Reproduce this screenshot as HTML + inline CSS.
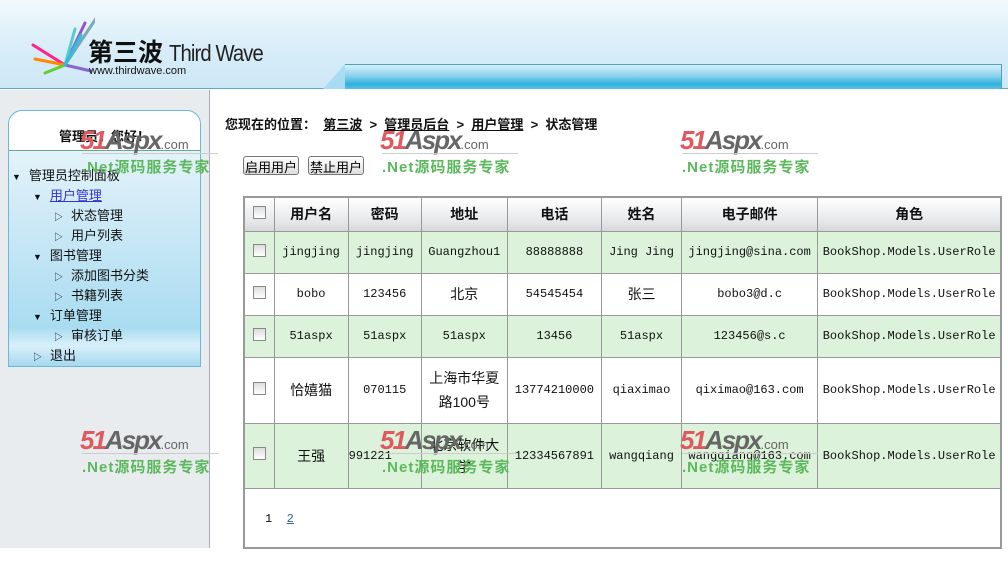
<!DOCTYPE html>
<html><head><meta charset="utf-8"><style>
*{margin:0;padding:0;box-sizing:border-box}
body{width:1008px;height:588px;position:relative;overflow:hidden;background:#fff;font-family:"Liberation Sans","Noto Sans CJK SC",sans-serif;font-size:13px;color:#111}
.hdr{position:absolute;left:0;top:0;width:1008px;height:89px;background:linear-gradient(#f2f9fd,#d6ecf8 60%,#cfe8f6);border-bottom:1px solid #5aa9c8}
.band{position:absolute;left:345px;top:64px;width:657px;height:25px;background:linear-gradient(#d8eefa,#8ad2ee 45%,#2fb0dc 80%,#5cc0e4);border-top:1px solid #4aa3c6;border-right:1px solid #4aa3c6}
.band:before{content:"";position:absolute;left:-22px;top:-1px;border-right:22px solid #a8dcf2;border-top:25px solid transparent}
.side{position:absolute;left:0;top:90px;width:210px;height:458px;background:#e9ecef;border-right:1px solid #aab}
.box{position:absolute;left:8px;top:110px;width:193px;height:257px;border:1px solid #6bb8d8;border-radius:14px 14px 0 0;background:linear-gradient(#f4fafd 0,#e0f1f9 20%,#a9dcf1 85%,#d8f0fa 92%,#a5d8ef)}
.box .t{position:absolute;left:0;top:0;width:100%;height:40px;background:#fff;border-radius:14px 14px 0 0;text-align:center;line-height:52px;font-weight:bold;font-size:13px;border-bottom:1px solid #6a8;}
.nav{position:absolute;font-size:13px;color:#111}
.tri{display:inline-block;margin-right:8px;font-size:9px}
table{position:absolute;left:243px;top:196px;width:759px;border-collapse:collapse;border:2px solid #999;border-bottom:none;table-layout:fixed}
td,th{border:1px solid #999;text-align:center;font-family:"Liberation Mono","Noto Sans CJK SC",monospace;font-size:12px;font-weight:normal;white-space:nowrap;overflow:visible}
th{height:34px;background:linear-gradient(#fff,#e6e8ea 70%,#d5d8da);font-family:"Liberation Sans","Noto Sans CJK SC",sans-serif;font-weight:bold;font-size:14px;border-top:none}
tr.g td{background:#dcf2da}
td.c{font-family:"Liberation Sans","Noto Sans CJK SC",sans-serif;font-size:14px;white-space:normal}
.cb{display:inline-block;width:13px;height:13px;border:1px solid #888;background:linear-gradient(#ddd,#fff)}
.pager{position:absolute;left:243px;top:487px;width:759px;height:62px;border:2px solid #999;border-top:none}
.wm{position:absolute;width:140px;height:55px}
.wm .a{position:absolute;left:0;top:2px;font:italic bold 26px "Liberation Sans",sans-serif;color:#e0595e;letter-spacing:-2px}
.wm .a b{color:#666}
.wm .a i{font-size:13px;color:#666;font-weight:normal;font-style:normal;letter-spacing:0}
.wm .l{position:absolute;left:2px;top:30px;width:136px;border-top:1px solid #ccc}
.wm .n{position:absolute;left:2px;top:33px;font:bold 15px "Liberation Sans","Noto Sans CJK SC",sans-serif;color:#5cb85c;letter-spacing:1px}
button{font-family:"Liberation Sans","Noto Sans CJK SC",sans-serif;font-size:13px;border:1px solid #777;border-radius:3px;background:linear-gradient(#fff,#ddd);padding:0 1px;height:19px;position:absolute;top:156px}
</style></head><body>
<div class="hdr">
<svg style="position:absolute;left:25px;top:15px" width="70" height="60"><g stroke-width="3" stroke-linecap="round"><line x1="40" y1="50" x2="72" y2="2" stroke="#7ab"/><line x1="40" y1="50" x2="60" y2="8" stroke="#9d4fd0"/><line x1="40" y1="50" x2="50" y2="14" stroke="#5cc"/><line x1="40" y1="50" x2="8" y2="30" stroke="#f28"/><line x1="40" y1="50" x2="10" y2="44" stroke="#f80"/><line x1="40" y1="50" x2="20" y2="58" stroke="#6c3"/><line x1="40" y1="50" x2="66" y2="56" stroke="#86c"/><line x1="40" y1="50" x2="56" y2="20" stroke="#3bd"/></g></svg>
<div style="position:absolute;left:88px;top:36px;font:bold 25px 'Noto Sans CJK SC',sans-serif;color:#111;line-height:30px;white-space:nowrap">第三波<span style="font:23px 'Liberation Sans',sans-serif;font-weight:normal;color:#222;letter-spacing:-1px;display:inline-block;transform:scaleX(0.88);transform-origin:left;margin-left:6px">Third Wave</span></div>
<div style="position:absolute;left:89px;top:65px;font-size:11px;color:#111">www.thirdwave.com</div>
<div class="band"></div>
</div>
<div class="side"></div>
<div class="box"><div class="t">管理员，您好！</div></div>
<div class="nav" style="left:12px;top:165px"><span class="tri">▼</span>管理员控制面板</div>
<div class="nav" style="left:33px;top:185px"><span class="tri">▼</span><u style="color:#33c">用户管理</u></div>
<div class="nav" style="left:54px;top:205px"><span class="tri">▷</span>状态管理</div>
<div class="nav" style="left:54px;top:225px"><span class="tri">▷</span>用户列表</div>
<div class="nav" style="left:33px;top:245px"><span class="tri">▼</span>图书管理</div>
<div class="nav" style="left:54px;top:265px"><span class="tri">▷</span>添加图书分类</div>
<div class="nav" style="left:54px;top:285px"><span class="tri">▷</span>书籍列表</div>
<div class="nav" style="left:33px;top:305px"><span class="tri">▼</span>订单管理</div>
<div class="nav" style="left:54px;top:325px"><span class="tri">▷</span>审核订单</div>
<div class="nav" style="left:33px;top:345px"><span class="tri">▷</span>退出</div>

<div style="position:absolute;left:225px;top:114px;font-weight:bold;font-size:13px">您现在的位置：&nbsp;&nbsp;<u>第三波</u> &nbsp;&gt;&nbsp; <u>管理员后台</u> &nbsp;&gt;&nbsp; <u>用户管理</u> &nbsp;&gt;&nbsp; 状态管理</div>
<button style="left:243px">启用用户</button><button style="left:308px">禁止用户</button>

<table>
<colgroup><col style="width:30px"><col style="width:74px"><col style="width:73px"><col style="width:86px"><col style="width:94px"><col style="width:80px"><col style="width:136px"><col style="width:183px"></colgroup>
<tr><th><span class="cb"></span></th><th>用户名</th><th>密码</th><th>地址</th><th>电话</th><th>姓名</th><th>电子邮件</th><th>角色</th></tr>
<tr class="g" style="height:42px"><td><span class="cb"></span></td><td>jingjing</td><td>jingjing</td><td>Guangzhou1</td><td>88888888</td><td>Jing Jing</td><td>jingjing@sina.com</td><td>BookShop.Models.UserRole</td></tr>
<tr style="height:42px"><td><span class="cb"></span></td><td>bobo</td><td>123456</td><td class="c">北京</td><td>54545454</td><td class="c">张三</td><td>bobo3@d.c</td><td>BookShop.Models.UserRole</td></tr>
<tr class="g" style="height:42px"><td><span class="cb"></span></td><td>51aspx</td><td>51aspx</td><td>51aspx</td><td>13456</td><td>51aspx</td><td>123456@s.c</td><td>BookShop.Models.UserRole</td></tr>
<tr style="height:66px"><td><span class="cb"></span></td><td class="c">恰嬉猫</td><td>070115</td><td class="c" style="line-height:24px">上海市华夏<br>路100号</td><td>13774210000</td><td>qiaximao</td><td>qiximao@163.com</td><td>BookShop.Models.UserRole</td></tr>
<tr class="g" style="height:65px"><td><span class="cb"></span></td><td class="c">王强</td><td style="text-align:left">991221</td><td class="c" style="line-height:22px">北京软件大<br>学</td><td>12334567891</td><td>wangqiang</td><td>wangqiang@163.com</td><td>BookShop.Models.UserRole</td></tr>
</table>
<div class="pager"><span style="position:absolute;left:20px;top:25px;font-family:'Liberation Mono',monospace;font-size:12px">1 &nbsp;<u style="color:#369">2</u></span></div>

<div class="wm" style="left:80px;top:123px"><div class="a">51<b>Aspx</b><i>.com</i></div><div class="l"></div><div class="n">.Net源码服务专家</div></div>
<div class="wm" style="left:380px;top:123px"><div class="a">51<b>Aspx</b><i>.com</i></div><div class="l"></div><div class="n">.Net源码服务专家</div></div>
<div class="wm" style="left:680px;top:123px"><div class="a">51<b>Aspx</b><i>.com</i></div><div class="l"></div><div class="n">.Net源码服务专家</div></div>
<div class="wm" style="left:80px;top:423px"><div class="a">51<b>Aspx</b><i>.com</i></div><div class="l"></div><div class="n">.Net源码服务专家</div></div>
<div class="wm" style="left:380px;top:423px"><div class="a">51<b>Aspx</b><i>.com</i></div><div class="l"></div><div class="n">.Net源码服务专家</div></div>
<div class="wm" style="left:680px;top:423px"><div class="a">51<b>Aspx</b><i>.com</i></div><div class="l"></div><div class="n">.Net源码服务专家</div></div>
</body></html>
